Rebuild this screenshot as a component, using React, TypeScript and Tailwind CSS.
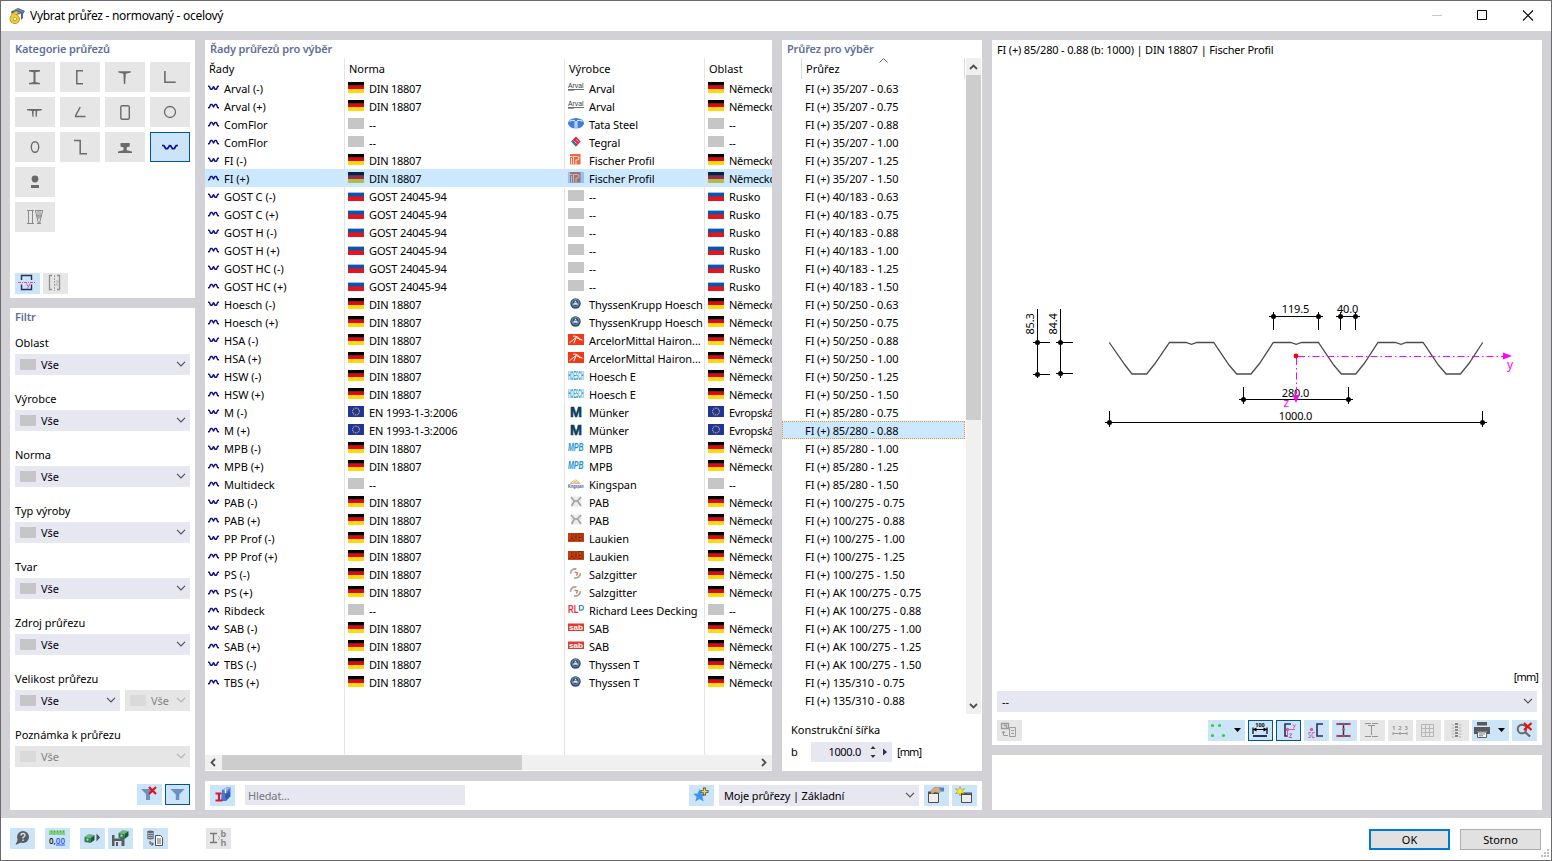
import type { ReactNode } from 'react';
import clsx from 'clsx';

type Region = 'de' | 'ru' | 'eu' | 'none';

interface Series {
  name: string;
  up: boolean;
  norm: string;
  maker: string;
  region: Region;
}

const s = (name: string, up: boolean, norm: string, maker: string, region: Region): Series => ({
  name,
  up,
  norm,
  maker,
  region,
});

const DIN = 'DIN 18807';
const GOST = 'GOST 24045-94';
const EN = 'EN 1993-1-3:2006';

const series: Series[] = [
  s('Arval (-)', false, DIN, 'Arval', 'de'),
  s('Arval (+)', true, DIN, 'Arval', 'de'),
  s('ComFlor', true, '--', 'Tata Steel', 'none'),
  s('ComFlor', true, '--', 'Tegral', 'none'),
  s('FI (-)', false, DIN, 'Fischer Profil', 'de'),
  s('FI (+)', true, DIN, 'Fischer Profil', 'de'),
  s('GOST C (-)', false, GOST, '--', 'ru'),
  s('GOST C (+)', true, GOST, '--', 'ru'),
  s('GOST H (-)', false, GOST, '--', 'ru'),
  s('GOST H (+)', true, GOST, '--', 'ru'),
  s('GOST HC (-)', false, GOST, '--', 'ru'),
  s('GOST HC (+)', true, GOST, '--', 'ru'),
  s('Hoesch (-)', false, DIN, 'ThyssenKrupp Hoesch', 'de'),
  s('Hoesch (+)', true, DIN, 'ThyssenKrupp Hoesch', 'de'),
  s('HSA (-)', false, DIN, 'ArcelorMittal Hairon...', 'de'),
  s('HSA (+)', true, DIN, 'ArcelorMittal Hairon...', 'de'),
  s('HSW (-)', false, DIN, 'Hoesch E', 'de'),
  s('HSW (+)', true, DIN, 'Hoesch E', 'de'),
  s('M (-)', false, EN, 'Münker', 'eu'),
  s('M (+)', true, EN, 'Münker', 'eu'),
  s('MPB (-)', false, DIN, 'MPB', 'de'),
  s('MPB (+)', true, DIN, 'MPB', 'de'),
  s('Multideck', true, '--', 'Kingspan', 'none'),
  s('PAB (-)', false, DIN, 'PAB', 'de'),
  s('PAB (+)', true, DIN, 'PAB', 'de'),
  s('PP Prof (-)', false, DIN, 'Laukien', 'de'),
  s('PP Prof (+)', true, DIN, 'Laukien', 'de'),
  s('PS (-)', false, DIN, 'Salzgitter', 'de'),
  s('PS (+)', true, DIN, 'Salzgitter', 'de'),
  s('Ribdeck', true, '--', 'Richard Lees Decking', 'none'),
  s('SAB (-)', false, DIN, 'SAB', 'de'),
  s('SAB (+)', true, DIN, 'SAB', 'de'),
  s('TBS (-)', false, DIN, 'Thyssen T', 'de'),
  s('TBS (+)', true, DIN, 'Thyssen T', 'de'),
];

const regionNames: Record<Region, string> = {
  de: 'Německo',
  ru: 'Rusko',
  eu: 'Evropská',
  none: '--',
};

const sections = [
  '35/207 - 0.63', '35/207 - 0.75', '35/207 - 0.88', '35/207 - 1.00', '35/207 - 1.25', '35/207 - 1.50',
  '40/183 - 0.63', '40/183 - 0.75', '40/183 - 0.88', '40/183 - 1.00', '40/183 - 1.25', '40/183 - 1.50',
  '50/250 - 0.63', '50/250 - 0.75', '50/250 - 0.88', '50/250 - 1.00', '50/250 - 1.25', '50/250 - 1.50',
  '85/280 - 0.75', '85/280 - 0.88', '85/280 - 1.00', '85/280 - 1.25', '85/280 - 1.50',
  '100/275 - 0.75', '100/275 - 0.88', '100/275 - 1.00', '100/275 - 1.25', '100/275 - 1.50',
  'AK 100/275 - 0.75', 'AK 100/275 - 0.88', 'AK 100/275 - 1.00', 'AK 100/275 - 1.25', 'AK 100/275 - 1.50',
  '135/310 - 0.75', '135/310 - 0.88',
];

const SELECTED_SERIES = 5;
const SELECTED_SECTION = 19;

/* ---------- small building blocks ---------- */

const Chevron = ({ muted = false }: { muted?: boolean }) => (
  <svg width="10" height="6" viewBox="0 0 10 6" className="mb-[2px] shrink-0">
    <path d="M1 .8l4 4 4-4" fill="none" stroke={muted ? '#b4b4b4' : '#505055'} strokeWidth="1.2" />
  </svg>
);

const Combo = ({ className, disabled = false }: { className?: string; disabled?: boolean }) => (
  <div
    className={clsx(
      'flex h-[21px] items-center pl-[5px] pr-1',
      disabled ? 'bg-[#e6e6e6] text-[#848484]' : 'bg-[#e7e7f2]',
      className,
    )}
  >
    <span className={clsx('h-[11px] w-4 shrink-0', disabled ? 'bg-[#dadada]' : 'bg-[#c6c6c6]')} />
    <span className="grow pl-[5px] leading-[21px]">Vše</span>
    <Chevron muted={disabled} />
  </div>
);

const PanelTitle = ({ children }: { children: ReactNode }) => (
  <h2 className="h-[18px] pl-[5px] text-[11px] font-semibold leading-[18px] tracking-[-0.14px] text-[#5f6f98]">{children}</h2>
);

interface ToolButtonProps {
  state?: 'normal' | 'active' | 'disabled';
  wide?: boolean;
  className?: string;
  children: ReactNode;
}

const ToolButton = ({ state = 'normal', wide = false, className, children }: ToolButtonProps) => (
  <button
    className={clsx(
      'block h-[21px] shrink-0',
      wide ? 'w-[37px]' : 'w-[25px]',
      state === 'disabled' ? 'bg-[#e6e6e6]' : 'bg-[#cce4f7]',
      state === 'active' && 'outline-1 -outline-offset-1 outline-[#005499]',
      className,
    )}
  >
    <svg width={wide ? 37 : 25} height="21" viewBox={wide ? '0 0 37 21' : '0 0 25 21'} className="block">
      {children}
    </svg>
  </button>
);

/* ---------- category icons, 40x30 ---------- */

const g = '#6a6a6a';

const categoryIcons: ReactNode[] = [
  <path d="M14 8h11v1.4l-4.500.8v9.800l4.500.9v1.400H14v-1.400l4.500-.9v-9.800L14 9.400z" fill={g} />,
  <path d="M23 8.700h-6.200v13.100H23" fill="none" stroke={g} strokeWidth="1.500" />,
  <path d="M13.300 9.300h12.500v1.300l-5 1.100L20.200 22h-1.300l-.5-10.300-5.100-1.100z" fill={g} />,
  <path d="M14.900 9v11.200h10.800" fill="none" stroke={g} strokeWidth="1.600" />,
  <path d="M12 12h14.800v1.300l-4.600.8-.4 5.700h-1.200V14h-2v5.800h-1.200l-.5-5.700-4.900-.8z" fill={g} />,
  <path d="M20.200 10l-4.600 8.600v.9h9.900" fill="none" stroke={g} strokeWidth="1.500" />,
  <rect x="15.800" y="8.800" width="8.500" height="13.400" rx="1.500" fill="none" stroke={g} strokeWidth="1.400" />,
  <circle cx="20" cy="15" r="5.500" fill="none" stroke={g} strokeWidth="1.300" />,
  <ellipse cx="20" cy="15" rx="3.700" ry="5.300" fill="none" stroke={g} strokeWidth="1.400" />,
  <path d="M14 8.600h6.200v13.200H27" fill="none" stroke={g} strokeWidth="1.500" />,
  <path d="M15.500 11h9.200v3.500l-3 .8v2.900l5.300 1.300V21H13v-1.500l5.500-1.300v-2.900l-3-.8z" fill={g} />,
  <path
    d="M12 13.500h1.800l2 3.200h1.700l1.900-3h1.200l1.900 3h1.700l2-3.200H28"
    fill="none"
    stroke="#10108c"
    strokeWidth="1.700"
    strokeLinejoin="round"
  />,
  <g fill={g}>
    <circle cx="20" cy="12" r="3.400" />
    <path d="M16 18h8v3h-8z" />
  </g>,
  <g fill="none" stroke="#8b8b8b" strokeWidth="1">
    <path d="M12 8.500h7M13.500 8.500v13M17.500 8.500v13M12 21.500h7M20 8.500h8M20.500 9l3 12.500M27.500 9l-3 12.500M23 9v8M25 9v8M22 21.500h4M21 14h6" />
  </g>,
];

const SeriesWave = ({ up }: { up: boolean }) => (
  <svg width="11" height="6" viewBox="0 0 11 6" className="mb-[1px] shrink-0">
    <path
      d={
        up
          ? 'M0 4.700h1.200L2.600 1.500h1.500L5.500 4l1.400-2.500h1.500l1.400 3.200H11'
          : 'M0 1.200h1.200l1.400 3h1.500L5.500 1.700l1.400 2.500h1.500l1.400-3H11'
      }
      fill="none"
      stroke="#10108c"
      strokeWidth="1.500"
      strokeLinejoin="round"
    />
  </svg>
);

/* ---------- flags and maker logos, 16x11 ---------- */

const Flag = ({ region }: { region: Region }) => (
  <svg width="16" height="11" viewBox="0 0 16 11" className="shrink-0">
    {region === 'de' && (
      <>
        <path d="M0 0h16v4H0z" fill="#000" />
        <path d="M0 3h16v5H0z" fill="#dd0a14" />
        <path d="M0 3h16v.6H0z" fill="#44272a" />
        <path d="M0 7h16v4H0z" fill="#fbdb0c" />
      </>
    )}
    {region === 'ru' && (
      <>
        <path d="M0 2h16v1H0z" fill="#9fc0e4" />
        <path d="M0 3h16v4H0z" fill="#0f54ab" />
        <path d="M0 6.500h16V11H0z" fill="#e5141f" />
      </>
    )}
    {region === 'eu' && (
      <>
        <path d="M0 0h16v11H0z" fill="#21349a" />
        <circle cx="8" cy="5.500" r="3.400" fill="none" stroke="#c9bd56" strokeWidth="1.100" strokeDasharray="1 .78" />
      </>
    )}
    {region === 'none' && <path d="M0 0h16v11H0z" fill="#c6c6c6" />}
  </svg>
);

const roundel = (
  <g>
    <circle cx="7.500" cy="5.500" r="5.200" fill="#2b4b70" />
    <circle cx="7.500" cy="5" r="3.600" fill="none" stroke="#8fa5bc" strokeWidth=".8" />
    <path d="M7.500 2.300l1.200 2H6.300zM5.900 4.800h3.200l1 1.900H4.900z" fill="#dfe7ee" />
  </g>
);

const makerLogos: Record<string, ReactNode> = {
  Arval: (
    <g>
      <text x="0" y="6" fontSize="7" textLength="15.500" lengthAdjust="spacingAndGlyphs" fill="#3a3a3a">Arval</text>
      <path d="M0 7h16v1H0z" fill="#6b6b6b" />
      <path d="M0 8h6v1H0z" fill="#999" />
    </g>
  ),
  'Tata Steel': (
    <g>
      <ellipse cx="8" cy="5.300" rx="8" ry="5.300" fill="#3f7fd8" />
      <path d="M1.500 3.300C4 2 6 2 7.200 3.300L7 10.500M14.500 3.300C12 2 10 2 8.800 3.300l.2 7.200" fill="none" stroke="#fff" strokeWidth="1" />
    </g>
  ),
  Tegral: (
    <g>
      <path d="M8 .6l4.700 4.900L8 10.400 3.300 5.500z" fill="#e11c49" />
      <path d="M3.300 5.500L8 10.400l1.300-1.300-4.600-5z" fill="#21857e" />
      <path d="M6 4.800l2.800 2.800M8 3.300l2.800 2.900" stroke="#fff" strokeWidth=".7" />
    </g>
  ),
  'Fischer Profil': (
    <g>
      <path d="M2 0h10.500v10.500H2z" fill="#ef6a3c" />
      <path d="M2 2.500h2.500M5.500 10V2.500H9q2 0 2 1.700T9 6H8v4.500M3.500 4v6.500" fill="none" stroke="#fff" strokeWidth=".8" />
    </g>
  ),
  'ThyssenKrupp Hoesch': roundel,
  'Thyssen T': roundel,
  'ArcelorMittal Hairon...': (
    <g>
      <path d="M0 0h16v11H0z" fill="#f23a17" />
      <path d="M1.500 8.700L8 3.500l6.500 2.700M5 2.200c3-.5 6 .8 7 4M8 3.500L5.800 9.200" fill="none" stroke="#fff" strokeWidth="1" />
    </g>
  ),
  'Hoesch E': (
    <text x="0" y="9.500" fontSize="12" fontWeight="700" textLength="15.500" lengthAdjust="spacingAndGlyphs" fill="#2f9fcb">HOESCH</text>
  ),
  Münker: (
    <text x="2" y="10.500" fontSize="14" fontWeight="700" textLength="12" lengthAdjust="spacingAndGlyphs" fill="#083d5c" stroke="#083d5c" strokeWidth=".5">M</text>
  ),
  MPB: (
    <text x="0" y="9" fontSize="10" fontWeight="700" fontStyle="italic" textLength="15.500" lengthAdjust="spacingAndGlyphs" fill="#1795cf">MPB</text>
  ),
  Kingspan: (
    <g>
      <path d="M2 6c1-3 3-3 4-4 2-1 3 0 4 1l3 3z" fill="#dcb97e" />
      <path d="M4 5l4-3M7 5.500L9.500 3" stroke="#fff" strokeWidth=".8" />
      <text x="0" y="10" fontSize="5" fontWeight="700" textLength="15.500" lengthAdjust="spacingAndGlyphs" fill="#39528f">Kingspan</text>
    </g>
  ),
  PAB: (
    <g>
      <path d="M3 .5h10.500v10H3z" fill="#ececec" />
      <path d="M3 1l3.500 4L3.500 10M13 1L9.500 5l3.500 5M6.500 5h3" fill="none" stroke="#9f9f9f" strokeWidth="1.500" />
    </g>
  ),
  Laukien: (
    <g>
      <path d="M0 1h16v9H0z" fill="#d9430f" />
      <text x=".3" y="9" fontSize="10" textLength="15" lengthAdjust="spacingAndGlyphs" fill="#4c1f12">LAUKIEN</text>
    </g>
  ),
  Salzgitter: (
    <g fill="none" strokeWidth="1.700">
      <path d="M8.500 1a4.700 4.700 0 0 0-6 4.800M6 9.700a4.700 4.700 0 0 0 6.300-4.500" stroke="#a0a0a0" />
      <path d="M6.500 4l3 1-1 2.400" stroke="#ee6b2b" strokeWidth="1.300" />
    </g>
  ),
  'Richard Lees Decking': (
    <g>
      <text x="0" y="8.500" fontSize="10" fontWeight="700" textLength="10.500" lengthAdjust="spacingAndGlyphs" fill="#ee3340">RL</text>
      <path d="M11.500 1.500h2.300q1.700.2 1.700 2.300t-2 2.300h-2z" fill="none" stroke="#2e86d0" strokeWidth="1.200" />
    </g>
  ),
  SAB: (
    <g>
      <path d="M0 1.500h16v7.500H0z" fill="#e23b2e" />
      <text x="1" y="7.800" fontSize="8" fontWeight="700" textLength="14" lengthAdjust="spacingAndGlyphs" fill="#fff">sab</text>
    </g>
  ),
  '--': <path d="M0 0h16v11H0z" fill="#c6c6c6" />,
};

/* ---------- series table ---------- */

interface ColumnProps {
  title: string;
  className: string;
  cells: ReactNode[];
}

const Column = ({ title, className, cells }: ColumnProps) => (
  <div className={clsx('h-[697px] shrink-0 overflow-hidden whitespace-nowrap', className)}>
    <div className="h-[21px] pl-1 pt-px leading-[19px]">{title}</div>
    {cells.map((cell, i) => (
      <div key={i} className={clsx('flex h-[18px] items-center pl-[3px]', i === SELECTED_SERIES && 'bg-[#cce8ff]')}>
        {cell}
      </div>
    ))}
  </div>
);

const Label = ({ className, children }: { className?: string; children: ReactNode }) => (
  <span className={clsx('pl-[5px] pt-[2px] leading-4', className)}>{children}</span>
);

// A picture in a selected row is washed over with the highlight colour.
const Picture = ({ tinted, children }: { tinted: boolean; children: ReactNode }) => (
  <div className="relative mb-px h-[11px] w-4 shrink-0">
    {children}
    {tinted && <div className="absolute inset-0 bg-[#0078d7]/30" />}
  </div>
);

const SeriesPanel = () => (
  <section className="flex h-[731px] w-[567px] flex-col bg-white">
    <PanelTitle>Řady průřezů pro výběr</PanelTitle>
    <div className="flex grow overflow-hidden">
      <Column
        title="Řady"
        className="w-[140px] border-r border-[#e5e5e5]"
        cells={series.map((row) => (
          <>
            <SeriesWave up={row.up} />
            <Label>{row.name}</Label>
          </>
        ))}
      />
      <Column
        title="Norma"
        className="w-[220px] border-r border-[#e5e5e5]"
        cells={series.map((row, i) => (
          <>
            <Picture tinted={i === SELECTED_SERIES}>
              <Flag region={row.region} />
            </Picture>
            <Label className={row.norm === DIN ? 'tracking-[-0.25px]' : 'tracking-[-0.12px]'}>{row.norm}</Label>
          </>
        ))}
      />
      <Column
        title="Výrobce"
        className="w-[140px] border-r border-[#e5e5e5]"
        cells={series.map((row, i) => (
          <>
            <Picture tinted={i === SELECTED_SERIES}>
              <svg
                width="16"
                height="11"
                viewBox="0 0 16 11"
                className="block overflow-visible font-['Liberation_Sans',sans-serif] leading-none"
              >
                {makerLogos[row.maker]}
              </svg>
            </Picture>
            <Label className="tracking-[-0.07px]">{row.maker}</Label>
          </>
        ))}
      />
      <Column
        title="Oblast"
        className="w-[67px]"
        cells={series.map((row, i) => (
          <>
            <Picture tinted={i === SELECTED_SERIES}>
              <Flag region={row.region} />
            </Picture>
            <Label className={row.region === 'ru' ? undefined : 'tracking-[-0.3px]'}>{regionNames[row.region]}</Label>
          </>
        ))}
      />
    </div>
    <div className="mb-px flex h-[15px] items-center justify-between bg-[#f0f0f0]">
      <div className="flex h-full items-center">
        <svg width="17" height="15" viewBox="0 0 17 15">
          <path d="M10 4L6.500 7.500 10 11" fill="none" stroke="#505050" strokeWidth="1.800" />
        </svg>
        <div className="h-full w-[300px] bg-[#cdcdcd]" />
      </div>
      <svg width="17" height="15" viewBox="0 0 17 15">
        <path d="M7 4l3.500 3.500L7 11" fill="none" stroke="#505050" strokeWidth="1.800" />
      </svg>
    </div>
  </section>
);

const SectionPanel = () => (
  <section className="flex h-[731px] w-[200px] flex-col bg-white">
    <PanelTitle>Průřez pro výběr</PanelTitle>
    <div className="flex h-[656px]">
      <div className="w-[183px] whitespace-nowrap">
        <div className="flex h-[21px]">
          <div className="ml-[19px] flex w-[164px] border-x border-[#dcdcdc] pl-1">
            <span className="pt-px leading-[19px]">Průřez</span>
            <svg width="9" height="5" viewBox="0 0 9 5" className="ml-[39px]">
              <path d="M.5 4.500l4-4 4 4" fill="none" stroke="#606060" />
            </svg>
          </div>
        </div>
        {sections.map((name, i) => (
          <div
            key={name}
            className={clsx(
              'h-[18px] pl-[23px] pt-[2px] leading-4 tracking-[-0.06px]',
              i === SELECTED_SECTION && 'bg-[#cce8ff] outline-1 -outline-offset-1 outline-dotted outline-[#f28a2e]',
            )}
          >
            FI (+) {name}
          </div>
        ))}
      </div>
      <div className="ml-px flex w-[15px] flex-col justify-between bg-[#f0f0f0]">
        <div>
          <svg width="15" height="17" viewBox="0 0 15 17" className="block">
            <path d="M4 11l3.500-3.500L11 11" fill="none" stroke="#505050" strokeWidth="1.800" />
          </svg>
          <div className="h-[345px] bg-[#cdcdcd]" />
        </div>
        <svg width="15" height="17" viewBox="0 0 15 17" className="block">
          <path d="M4 7l3.500 3.500L11 7" fill="none" stroke="#505050" strokeWidth="1.800" />
        </svg>
      </div>
    </div>
    <div className="px-[9px] pt-[7px]">
      <div className="leading-[18px]">Konstrukční šířka</div>
      <div className="mt-[3px] flex h-5 items-center">
        <span className="w-5">b</span>
        <div className="flex h-5 w-[81px] items-center justify-end bg-[#e7e7f2]">
          <span className="pt-px tracking-[-0.3px]">1000.0</span>
          <svg width="31" height="20" viewBox="0 0 31 20">
            <path d="M9.500 7l2.500-3 2.500 3zM9.500 13l2.500 3 2.500-3zM22 6.500l4 3.500-4 3.500z" fill="#333" />
          </svg>
        </div>
        <span className="pl-[5px] tracking-[-0.9px]">[mm]</span>
      </div>
    </div>
  </section>
);

/* ---------- left side ---------- */

const CategoryPanel = () => (
  <section className="flex h-[258px] flex-col bg-white">
    <PanelTitle>Kategorie průřezů</PanelTitle>
    <div className="grid grow grid-cols-4 content-start gap-[5px] px-[5px] pt-1">
      {categoryIcons.map((icon, i) => (
        <button
          key={i}
          className={clsx(
            'h-[30px] w-10',
            i === 11 ? 'bg-[#cce4f7] outline-1 -outline-offset-1 outline-[#005499]' : 'bg-[#e6e6e6]',
            i >= 12 && 'col-start-1',
          )}
        >
          <svg width="40" height="30" viewBox="0 0 40 30" className="block">{icon}</svg>
        </button>
      ))}
    </div>
    <div className="flex gap-[3px] px-[5px] pb-1">
      <ToolButton>
        <path d="M9.500 2.500H6.500V7M14 2.500h2.500V7M9 2.500h5M6.500 11.500v5H16.500v-5" fill="none" stroke="#26305c" strokeWidth="1.400" />
        <path d="M3 9.500h17" stroke="#e0489c" strokeDasharray="3 1 1 1" />
        <path d="M11.500 10.500l1.500 3M15 10.500l-2.500 5" stroke="#d860a8" fill="none" />
      </ToolButton>
      <ToolButton state="disabled">
        <path d="M9 2.500H6.500v14H9M14 2.500h2.500v14H14" fill="none" stroke="#909090" strokeWidth="1.300" />
        <path d="M11.500 2v16" stroke="#a0a0a0" strokeDasharray="2 1" />
        <path d="M12.500 8h3l-3 4h3" stroke="#b4b4b4" fill="none" />
      </ToolButton>
    </div>
  </section>
);

const FilterLabel = ({ children }: { children: ReactNode }) => <div className="h-[18px] leading-[14px]">{children}</div>;

const FilterPanel = () => (
  <section className="flex grow flex-col bg-white">
    <PanelTitle>Filtr</PanelTitle>
    <div className="flex grow flex-col gap-[17px] px-[5px] pt-[10px]">
      {['Oblast', 'Výrobce', 'Norma', 'Typ výroby', 'Tvar', 'Zdroj průřezu'].map((label) => (
        <div key={label}>
          <FilterLabel>{label}</FilterLabel>
          <Combo />
        </div>
      ))}
      <div>
        <FilterLabel>Velikost průřezu</FilterLabel>
        <div className="flex gap-[5px]">
          <Combo className="w-[105px]" />
          <Combo className="w-[65px]" disabled />
        </div>
      </div>
      <div>
        <FilterLabel>Poznámka k průřezu</FilterLabel>
        <Combo disabled />
      </div>
    </div>
    <div className="flex justify-end gap-[3px] px-[5px] pb-[5px]">
      <ToolButton>
        <path d="M4 5h14l-5 5v6h-4v-6z" fill="#6c8fc4" />
        <path d="M12 3l7 7M19 3l-7 7" stroke="#e01414" strokeWidth="2.200" />
      </ToolButton>
      <ToolButton state="active">
        <path d="M5.500 5h14l-5.200 5.500v5.500h-3.500v-5.500z" fill="#6c8fc4" />
      </ToolButton>
    </div>
  </section>
);

/* ---------- drawing ---------- */

const dimDots: [number, number][] = [
  [1037.5, 342.5], [1037.5, 374.5], [1060.5, 342.5], [1060.5, 373.5],
  [1273.5, 316.5], [1318.5, 316.5], [1340.5, 316.5], [1355.5, 316.5],
  [1243.5, 399.5], [1348.5, 399.5], [1109.5, 422.5], [1482.5, 422.5],
];

const profilePath = [
  'M1109.300 342.500L1125 365L1132 374H1146.700L1155 363.500L1169.500 342.500',
  ...[0, 104.7, 209.4].map((dx) => {
    const x = (v: number) => v + dx;
    return [
      `H${x(1186)}L${x(1191.5)} 344.3L${x(1197)} 342.5H${x(1213.7)}`,
      `L${x(1229)} 365L${x(1236.7)} 374H${x(1251)}`,
      `L${x(1259.5)} 363.5L${x(1273.3)} 342.5`,
    ].join('');
  }),
].join('');

const ProfileDrawing = () => (
  <svg width="550" height="610" viewBox="992 61 550 610" className="block" fontSize="11">
    <path d={profilePath} fill="none" stroke="#4c4c4c" strokeWidth="1.300" />
    <path
      d="M1037.500 309v69M1033 342.500h17M1033 374.500h17M1060.500 309v69M1056 342.500h17M1056 373.500h17
        M1269 316.500h54M1273.500 312v18M1318.500 312v18M1336 316.500h24M1340.500 312v18M1355.500 312v18
        M1239 399.500h114M1243.500 387v17M1348.500 387v17M1105 422.500h382M1109.500 411v16M1482.500 411v16"
      stroke="#000"
      fill="none"
    />
    {dimDots.map(([cx, cy]) => (
      <circle key={`${cx}-${cy}`} cx={cx} cy={cy} r="2.500" />
    ))}
    <g textAnchor="middle" letterSpacing="-.15">
      <text transform="translate(1034 324) rotate(-90)">85.3</text>
      <text transform="translate(1057 324) rotate(-90)">84.4</text>
      <text x="1295.500" y="313">119.5</text>
      <text x="1347.500" y="313">40.0</text>
      <text x="1295.500" y="397">280.0</text>
      <text x="1295.500" y="420">1000.0</text>
    </g>
    <g fill="#ff00ff">
      <path d="M1298 356.500h205M1296.500 358v37" stroke="#ff00ff" fill="none" strokeDasharray="7 3 1.500 3" />
      <path d="M1503 352.500l9 3.500-9 3.500zM1292.500 395h7l-3.500 8z" />
      <text x="1507" y="369" fontSize="12">y</text>
      <text x="1283.500" y="407" fontSize="12">z</text>
    </g>
    <circle cx="1296" cy="356" r="2.400" fill="#ff0000" />
  </svg>
);

const PreviewPanel = () => (
  <section className="flex h-[705px] flex-col bg-white">
    <div className="h-[21px] pl-[5px] leading-[19px] tracking-[-0.17px]">
      FI (+) 85/280 - 0.88 (b: 1000) | DIN 18807 | Fischer Profil
    </div>
    <div className="h-[608px] overflow-hidden">
      <ProfileDrawing />
    </div>
    <div className="h-[22px] pr-1 text-right leading-4 tracking-[-0.9px]">[mm]</div>
    <div className="mx-[5px] flex h-[21px] items-center justify-between bg-[#e7e7f2] pl-[5px] pr-1">
      <span className="pt-px">--</span>
      <Chevron />
    </div>
    <div className="mt-2 flex gap-[3px] px-[5px]">
      <ToolButton state="disabled" className="mr-auto">
        <g fill="none" stroke="#9c9c9c">
          <path d="M4.500 3.500h7v5h-7zM6.500 5.500h3v3" strokeWidth="1.300" />
          <path d="M12.500 7.500h6v9h-6zM14 10.500h3M14 13.500h3M11 15.500H6.500v-4M5 13l1.500-2L8 13" />
        </g>
      </ToolButton>
      <ToolButton wide>
        <g fill="#32cd46">
          <circle cx="4.500" cy="5.500" r="1.600" />
          <circle cx="11.500" cy="5.500" r="1.600" />
          <circle cx="4.500" cy="15.500" r="1.600" />
          <circle cx="15.500" cy="15.500" r="1.600" />
        </g>
        <path d="M26 8h7l-3.500 4z" />
      </ToolButton>
      <ToolButton state="active">
        <text x="12" y="7" fontSize="5.500" fontWeight="700" textAnchor="middle">100</text>
        <path d="M5 9.500h14M5 7.500V14M19 7.500V14" stroke="#000" strokeWidth="1.200" fill="none" />
        <path d="M4.500 9.500l4-2v4zM19.500 9.500l-4-2v4z" />
        <path d="M5 15h14v2H5z" fill="#26305c" />
      </ToolButton>
      <ToolButton state="active">
        <path d="M15 4H9v12h3" fill="none" stroke="#26305c" strokeWidth="1.600" />
        <path d="M11 9.500h8M11.500 9.500v7M17 4.500l1 2M19.500 4.500l-2 4M13 14h3l-3 3.500h3" fill="none" stroke="#d45ca6" />
        <circle cx="11.500" cy="9.500" r="1.700" fill="#d45ca6" />
      </ToolButton>
      <ToolButton>
        <path d="M19 4h-6v12h6" fill="none" stroke="#26305c" strokeWidth="1.600" />
        <circle cx="7.500" cy="9.500" r="1.700" fill="#d45ca6" />
        <text x="4" y="18" fontSize="8" textLength="7" lengthAdjust="spacingAndGlyphs" fill="#d45ca6" fontWeight="600">SC</text>
      </ToolButton>
      <ToolButton>
        <path d="M5 4h13M5 16h13M11.500 4v12" fill="none" stroke="#26305c" strokeWidth="1.500" />
        <g fill="#ee3c3c">
          <circle cx="5.500" cy="4" r="1.300" />
          <circle cx="11.500" cy="4" r="1.300" />
          <circle cx="17.500" cy="4" r="1.300" />
          <circle cx="11.500" cy="9.500" r="1.300" />
          <circle cx="5.500" cy="16" r="1.300" />
          <circle cx="11.500" cy="16" r="1.300" />
          <circle cx="17.500" cy="16" r="1.300" />
        </g>
      </ToolButton>
      <ToolButton state="disabled">
        <path d="M5 3.500h6M12 3.500h6M11.500 5v10M8 5.500h7M5 16.500h6M12 16.500h6" fill="none" stroke="#929292" />
      </ToolButton>
      <ToolButton state="disabled">
        <text x="4" y="10" fontSize="6" fontWeight="700" textLength="16" fill="#9a9a9a">1 2 3</text>
        <path d="M5 13.500h14M5 12v3M12 12v3M19 12v3" stroke="#9a9a9a" fill="none" />
      </ToolButton>
      <ToolButton state="disabled">
        <path d="M5.500 4.500h12v12h-12zM9.500 4.500v12M13.500 4.500v12M5.500 8.500h12M5.500 12.500h12" fill="none" stroke="#b6b6b6" />
      </ToolButton>
      <ToolButton state="disabled">
        <path d="M12.500 3v15" stroke="#858585" strokeWidth="3" strokeDasharray="2 1" />
        <path d="M9 4.500v13M16 4.500v13" stroke="#b2b2b2" strokeWidth="2.500" strokeDasharray="1 2" />
      </ToolButton>
      <ToolButton wide>
        <path d="M5 2h10v3.500H5zM2 7h16v7h-3v-2.500H5V14H2z" fill="#59595c" />
        <path d="M5.500 12h9v5.500h-9z" fill="#fff" stroke="#59595c" />
        <path d="M7 14h6M7 15.800h4" stroke="#59595c" strokeWidth=".8" />
        <path d="M26 8h7l-3.500 4z" />
      </ToolButton>
      <ToolButton>
        <circle cx="10" cy="9" r="4.300" fill="none" stroke="#66666a" strokeWidth="1.900" />
        <path d="M13 12l5 4.500" stroke="#66666a" strokeWidth="2.300" />
        <path d="M12 3l7.500 7M19.500 3L12 10" stroke="#e01414" strokeWidth="2.300" />
      </ToolButton>
    </div>
  </section>
);

/* ---------- bars ---------- */

const SearchBar = () => (
  <div className="flex h-[29px] items-start bg-white px-[5px] pt-1">
    <ToolButton>
      <path d="M12 5l4-2.500h4.500v9L16 16h-5z" fill="#4c76cf" />
      <path d="M12 5l4-2.500h4.500L17 6z" fill="#8fb0ea" />
      <path d="M15 10l5-4v5l-4 4.500z" fill="#2f57ad" />
      <path d="M5.500 8.500h6M5.500 15.500h7M9 8.500v7" stroke="#d31c2e" strokeWidth="2.200" />
      <path d="M15.500 2.500v1M15.500 4.500V8" stroke="#fff" strokeWidth="1.400" />
    </ToolButton>
    <div className="ml-[10px] h-5 w-[220px] bg-[#e7e7f2] pl-[3px] pt-px leading-5 tracking-[-0.15px] text-[#76767c]">Hledat...</div>
    <ToolButton className="ml-auto">
      <path d="M10.500 4l1.800 4.500 4.700.3-3.600 3 1.300 4.700-4.200-2.600L6.300 16.500l1.300-4.700-3.600-3 4.700-.3z" fill="#3f96ec" />
      <path d="M15.500 2.500v8M11.500 6.500h8" stroke="#5d5636" strokeWidth="3.200" />
      <path d="M15.500 3.500v6M12.500 6.500h6" stroke="#e8d67c" strokeWidth="1.500" />
    </ToolButton>
    <div className="ml-[5px] flex h-[21px] w-[200px] items-center justify-between bg-[#e7e7f2] pl-[5px] pr-1">
      <span className="pt-px tracking-[-0.14px]">Moje průřezy | Základní</span>
      <Chevron />
    </div>
    <ToolButton className="ml-[5px]">
      <path d="M4.500 7.500h10v10h-10z" fill="#eee" stroke="#4c4c4c" />
      <path d="M4 6.500h11v2.500H4z" fill="#4c4c4c" />
      <path d="M6.500 6l3.500-3.500h6l2 2.500-3 3-4-1-3.500 2z" fill="#d3a88c" stroke="#a07c62" strokeWidth=".5" />
      <path d="M15 2.500h5v4h-3z" fill="#5880bf" />
    </ToolButton>
    <ToolButton className="ml-[3px]">
      <path d="M9.500 8.500h10v9h-10z" fill="#eee" stroke="#4c4c4c" />
      <path d="M9 7.500h11V10H9z" fill="#4c4c4c" />
      <path d="M15 8h4v1h-4z" fill="#4c60e0" />
      <path d="M8 1.500l1.200 3 3.300-.8-2 2.600 2 2.400-3.300-.6L8 11 6.800 8.100l-3.300.6 2-2.400-2-2.600 3.300.8z" fill="#f4ec28" stroke="#8c862c" strokeWidth=".5" />
    </ToolButton>
  </div>
);

const cube = (x: number, y: number) => (
  <g transform={`translate(${x} ${y})`}>
    <path d="M0 3l4-3 6 1-4 3z" fill="#6fb583" />
    <path d="M0 3l6 1v5L0 8z" fill="#2d8048" />
    <path d="M6 4l4-3v5L6 9z" fill="#1a5c31" />
    <path d="M2 4.500l2 .3v2L2 6.500z" fill="#b9dcc3" />
  </g>
);

const Footer = () => (
  <footer className="flex h-[42px] items-start bg-white pl-[9px] pt-[10px]">
    <ToolButton>
      <circle cx="13" cy="9" r="6" fill="#5c5c60" />
      <path d="M8 11l-2.500 6 6.500-3z" fill="#5c5c60" />
      <path d="M11 7.500q0-2 2-2t2 1.800q0 1-2 2.200v1M13 11.500v1.500" fill="none" stroke="#cce4f7" strokeWidth="1.400" />
    </ToolButton>
    <ToolButton className="ml-[10px]">
      <path d="M4 2.500h16V7H4z" fill="#86cf86" />
      <path d="M6.500 2.500v2M9.500 2.500v2M12.500 2.500v2M15.500 2.500v2M18.500 2.500v2" stroke="#4a9c52" strokeWidth=".8" />
      <text x="4" y="15.500" fontSize="9.500" fontWeight="600" textLength="16" lengthAdjust="spacingAndGlyphs" fill="#222">
        0,<tspan fill="#2f63e8">00</tspan>
      </text>
      <path d="M11 17h9" stroke="#2f63e8" />
    </ToolButton>
    <ToolButton className="ml-[10px]">
      {cube(4.5, 6)}
      <path d="M16.500 5.500l3.500 4-3.500 4z" fill="#505054" />
    </ToolButton>
    <ToolButton className="ml-[3px]">
      <path d="M4 7h11l1.500 1.500V18H4z" fill="#5c5c60" />
      <path d="M6.500 7h6v3.500h-6zM6.500 13h7v5h-7z" fill="#cce4f7" />
      <path d="M8 14h2v4H8z" fill="#5c5c60" />
      {cube(10.5, 2)}
    </ToolButton>
    <ToolButton className="ml-[10px]">
      <path d="M4 3.500q3.500-2 7 0v7q-3.500 2-7 0z" fill="#66666a" />
      <path d="M4 5q3.500 1.500 7 0M4 7q3.500 1.500 7 0M4 9q3.500 1.500 7 0" fill="none" stroke="#cce4f7" strokeWidth=".7" />
      <path d="M7 13v3h3M8.500 14.500l2 1.500-2 1.500" fill="none" stroke="#505054" />
      <path d="M12.500 7.500h5l2 2v8h-7z" fill="#fff" stroke="#505054" />
      <path d="M14 11h4M14 13h4M14 15h4" stroke="#505054" strokeWidth=".9" />
    </ToolButton>
    <ToolButton state="disabled" className="ml-[38px]">
      <path d="M4 5.500h7M4 14.500h7M7.500 5.500v9" stroke="#77777a" strokeWidth="1.300" fill="none" />
      <path d="M12 8l2 2-2 2" fill="none" stroke="#b5b5b5" />
      <text x="14.500" y="9" fontSize="9" fontWeight="700" fill="#8a8a8a">b</text>
      <text x="14.500" y="18" fontSize="9" fontWeight="700" fill="#8a8a8a">h</text>
    </ToolButton>
    <div className="ml-auto mt-px flex gap-[10px]">
      <button className="h-[21px] w-[81px] border-2 border-[#0078d7] bg-[#e1e1e1] leading-[18px]">OK</button>
      <button className="h-[21px] w-[81px] border border-[#adadad] bg-[#e1e1e1] leading-[20px]">Storno</button>
    </div>
    <svg width="10" height="10" viewBox="0 0 10 10" className="mt-[20px] shrink-0" fill="#bdbdbd">
      <path d="M6 1h2v2H6zM6 4h2v2H6zM3 4h2v2H3zM6 7h2v2H6zM3 7h2v2H3zM0 7h2v2H0z" />
    </svg>
  </footer>
);

const TitleBar = () => (
  <header className="flex h-[30px] items-center bg-white pl-2">
    <svg width="16" height="16" viewBox="0 0 16 16">
      <path d="M2 3.500L9 0l7 3-2 3v4l-2 2V6L3 7z" fill="#46658f" />
      <path d="M4 2.500l8 3M7 1l7 3" stroke="#93abc9" strokeWidth=".8" />
      <path d="M8.500 4.500C5 5 2 8 2 11.500" fill="none" stroke="#c79a16" strokeWidth="3" />
      <circle cx="5.800" cy="11" r="3.200" fill="#fff" stroke="#8c6a10" strokeWidth="3.600" />
      <circle cx="5.800" cy="11" r="3.200" fill="none" stroke="#f3cb2e" strokeWidth="2.700" />
      <path d="M8.500 4.500C5 5 2.300 8 2.300 11" fill="none" stroke="#f3cb2e" strokeWidth="2.200" />
    </svg>
    <h1 className="pl-[5px] text-[12px] leading-[18px] tracking-[-0.28px]">Vybrat průřez - normovaný - ocelový</h1>
    <svg width="129" height="30" viewBox="0 0 129 30" className="ml-auto">
      <path d="M10 14.500h10" stroke="#c8c8c8" />
      <path d="M55.500 9.500h9v9h-9z" fill="none" stroke="#000" />
      <path d="M101 9.500l10 10M111 9.500l-10 10" stroke="#000" strokeWidth="1.100" />
    </svg>
  </header>
);

export default function App() {
  return (
    <div className="h-[861px] w-[1552px] overflow-hidden border border-[#6b696e] bg-[#d2d1d6] font-['Noto_Sans','Open_Sans',sans-serif] text-[11px] text-black">
      <TitleBar />
      <main className="flex h-[787px] gap-[10px] px-[9px] pb-2 pt-[9px]">
        <div className="flex w-[185px] flex-col gap-[10px]">
          <CategoryPanel />
          <FilterPanel />
        </div>
        <div className="flex w-[777px] flex-col gap-[10px]">
          <div className="flex gap-[10px]">
            <SeriesPanel />
            <SectionPanel />
          </div>
          <SearchBar />
        </div>
        <div className="flex w-[550px] flex-col gap-[10px]">
          <PreviewPanel />
          <section className="grow bg-white" />
        </div>
      </main>
      <Footer />
    </div>
  );
}
